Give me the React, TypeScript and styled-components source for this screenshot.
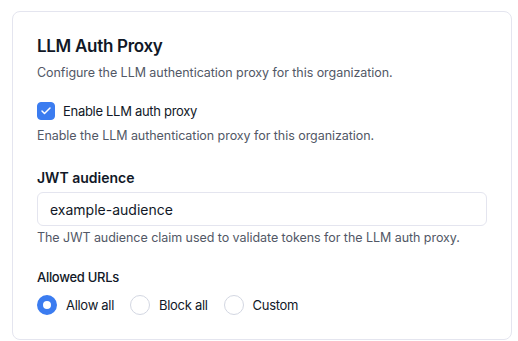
import React, { useState } from 'react';
import styled, { createGlobalStyle } from 'styled-components';

const GlobalStyle = createGlobalStyle`
  html, body {
    margin: 0;
    padding: 0;
    background: #ffffff;
    font-family: Inter, "Noto Sans", sans-serif;
    color: #111827;
    -webkit-font-smoothing: antialiased;
  }
`;

const Page = styled.div`
  padding: 11px 6px 0 12px;
`;

const Card = styled.section`
  width: 500px;
  box-sizing: border-box;
  border: 1px solid #e4e5ef;
  border-radius: 8px;
  padding: 20px 24px 24px;
  display: flex;
  flex-direction: column;
`;

const Title = styled.h2`
  margin: 0;
  font-size: 17px;
  line-height: 28px;
  font-weight: 600;
  letter-spacing: -0.3px;
  color: #111827;
`;

const Muted = styled.p<{ $top?: number }>`
  margin: ${(p) => p.$top ?? 0}px 0 0;
  font-size: 12.5px;
  line-height: 20px;
  letter-spacing: -0.05px;
  color: #525866;
`;

const CheckRow = styled.label`
  display: flex;
  align-items: center;
  gap: 8px;
  margin-top: 18px;
  font-size: 13px;
  line-height: 20px;
  letter-spacing: -0.3px;
  color: #111827;
  cursor: pointer;
`;

const CheckBox = styled.span<{ $checked: boolean }>`
  width: 18px;
  height: 18px;
  box-sizing: border-box;
  border-radius: 4px;
  display: inline-flex;
  align-items: center;
  justify-content: center;
  background: ${(p) => (p.$checked ? '#3b7cf0' : '#ffffff')};
  border: 1px solid ${(p) => (p.$checked ? '#3b7cf0' : '#cfd3de')};
`;

const FieldLabel = styled.div<{ $top: number; $weight?: number; $size?: number; $tracking?: number }>`
  margin-top: ${(p) => p.$top}px;
  font-size: ${(p) => p.$size ?? 14}px;
  line-height: 20px;
  font-weight: ${(p) => p.$weight ?? 600};
  letter-spacing: ${(p) => p.$tracking ?? 0}px;
  color: #111827;
`;

const Input = styled.input`
  margin-top: 4px;
  height: 34px;
  box-sizing: border-box;
  border: 1px solid #e4e5ef;
  border-radius: 6px;
  padding: 0 12px;
  font-family: inherit;
  font-size: 14px;
  color: #111827;
  outline: none;
`;

const RadioGroup = styled.div`
  display: flex;
  align-items: center;
  gap: 16px;
  margin-top: 8px;
`;

const RadioItem = styled.label`
  display: flex;
  align-items: center;
  gap: 9px;
  font-size: 13px;
  line-height: 20px;
  letter-spacing: -0.3px;
  color: #111827;
  cursor: pointer;
`;

const RadioDot = styled.span<{ $on: boolean }>`
  width: 20px;
  height: 20px;
  box-sizing: border-box;
  border-radius: 50%;
  background: #ffffff;
  border: ${(p) => (p.$on ? '6px solid #3b7cf0' : '1px solid #d3d7e2')};
`;

const options = ['Allow all', 'Block all', 'Custom'];

export default function App() {
  const [enabled, setEnabled] = useState(true);
  const [mode, setMode] = useState('Allow all');

  return (
    <Page>
      <GlobalStyle />
      <Card>
        <Title>LLM Auth Proxy</Title>
        <Muted $top={3}>Configure the LLM authentication proxy for this organization.</Muted>

        <CheckRow onClick={() => setEnabled(!enabled)}>
          <CheckBox $checked={enabled}>
            {enabled && (
              <svg width="12" height="12" viewBox="0 0 24 24" fill="none" stroke="#fff" strokeWidth="3" strokeLinecap="round" strokeLinejoin="round">
                <path d="M20 6 9 17l-5-5" />
              </svg>
            )}
          </CheckBox>
          Enable LLM auth proxy
        </CheckRow>
        <Muted $top={5}>Enable the LLM authentication proxy for this organization.</Muted>

        <FieldLabel $top={22}>JWT audience</FieldLabel>
        <Input defaultValue="example-audience" />
        <Muted $top={2}>The JWT audience claim used to validate tokens for the LLM auth proxy.</Muted>

        <FieldLabel $top={19} $weight={500} $size={13} $tracking={-0.3}>Allowed URLs</FieldLabel>
        <RadioGroup>
          {options.map((o) => (
            <RadioItem key={o} onClick={() => setMode(o)}>
              <RadioDot $on={mode === o} />
              {o}
            </RadioItem>
          ))}
        </RadioGroup>
      </Card>
    </Page>
  );
}
